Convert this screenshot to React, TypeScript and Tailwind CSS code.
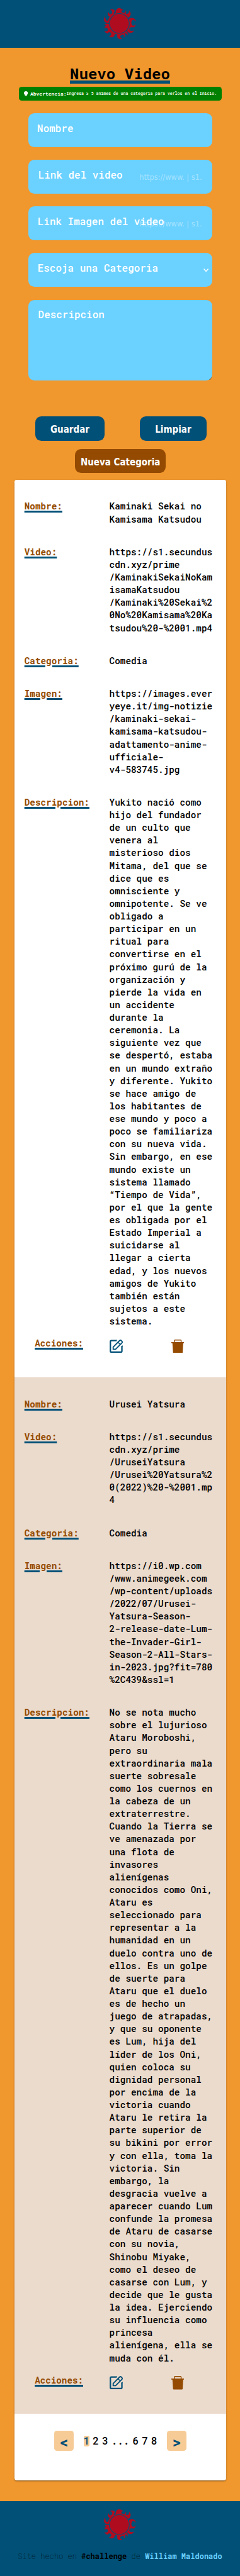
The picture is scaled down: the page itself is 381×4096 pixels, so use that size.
type Video = {
  nombre: string;
  video: string;
  categoria: string;
  imagen: string;
  descripcion: string;
};

const videos: Video[] = [
  {
    nombre: 'Kaminaki Sekai no\nKamisama Katsudou',
    video:
      'https://s1.secundus\ncdn.xyz/prime\n/KaminakiSekaiNoKam\nisamaKatsudou\n/Kaminaki%20Sekai%2\n0No%20Kamisama%20Ka\ntsudou%20-%2001.mp4',
    categoria: 'Comedia',
    imagen:
      'https://images.ever\nyeye.it/img-notizie\n/kaminaki-sekai-\nkamisama-katsudou-\nadattamento-anime-\nufficiale-\nv4-583745.jpg',
    descripcion:
      'Yukito nació como\nhijo del fundador\nde un culto que\nvenera al\nmisterioso dios\nMitama, del que se\ndice que es\nomnisciente y\nomnipotente. Se ve\nobligado a\nparticipar en un\nritual para\nconvertirse en el\npróximo gurú de la\norganización y\npierde la vida en\nun accidente\ndurante la\nceremonia. La\nsiguiente vez que\nse despertó, estaba\nen un mundo extraño\ny diferente. Yukito\nse hace amigo de\nlos habitantes de\nese mundo y poco a\npoco se familiariza\ncon su nueva vida.\nSin embargo, en ese\nmundo existe un\nsistema llamado\n“Tiempo de Vida”,\npor el que la gente\nes obligada por el\nEstado Imperial a\nsuicidarse al\nllegar a cierta\nedad, y los nuevos\namigos de Yukito\ntambién están\nsujetos a este\nsistema.',
  },
  {
    nombre: 'Urusei Yatsura',
    video:
      'https://s1.secundus\ncdn.xyz/prime\n/UruseiYatsura\n/Urusei%20Yatsura%2\n0(2022)%20-%2001.mp\n4',
    categoria: 'Comedia',
    imagen:
      'https://i0.wp.com\n/www.animegeek.com\n/wp-content/uploads\n/2022/07/Urusei-\nYatsura-Season-\n2-release-date-Lum-\nthe-Invader-Girl-\nSeason-2-All-Stars-\nin-2023.jpg?fit=780\n%2C439&ssl=1',
    descripcion:
      'No se nota mucho\nsobre el lujurioso\nAtaru Moroboshi,\npero su\nextraordinaria mala\nsuerte sobresale\ncomo los cuernos en\nla cabeza de un\nextraterrestre.\nCuando la Tierra se\nve amenazada por\nuna flota de\ninvasores\nalienígenas\nconocidos como Oni,\nAtaru es\nseleccionado para\nrepresentar a la\nhumanidad en un\nduelo contra uno de\nellos. Es un golpe\nde suerte para\nAtaru que el duelo\nes de hecho un\njuego de atrapadas,\ny que su oponente\nes Lum, hija del\nlíder de los Oni,\nquien coloca su\ndignidad personal\npor encima de la\nvictoria cuando\nAtaru le retira la\nparte superior de\nsu bikini por error\ny con ella, toma la\nvictoria. Sin\nembargo, la\ndesgracia vuelve a\naparecer cuando Lum\nconfunde la promesa\nde Ataru de casarse\ncon su novia,\nShinobu Miyake,\ncomo el deseo de\ncasarse con Lum, y\ndecide que le gusta\nla idea. Ejerciendo\nsu influencia como\nprincesa\nalienígena, ella se\nmuda con él.',
  },
];

function Sun() {
  return (
    <svg viewBox="34 6 266 260" className="block h-[49.3px] w-[50.5px]">
      <path
        fill="#b00c20"
        d="M133 48C130 32 138 8 158 6C170 5 178 8 180 14Q188 18 192 13C193 24 184 26 177 27C180 40 190 46 200 46C212 44 220 34 214 22C222 30 222 46 216 52C232 58 248 48 246 24C262 42 264 74 235 86L240 104C250 86 284 78 299 108L298 120C290 98 272 100 266 115C258 136 268 154 282 152C292 150 297 146 298 136C300 160 286 170 270 166C252 162 240 178 250 192C262 200 278 198 286 189C280 210 264 214 250 212C234 208 226 198 226 186L222 198C232 204 235 220 231 236C230 222 222 216 206 217C216 228 214 246 196 250C202 244 206 234 200 230C190 224 176 232 171 240C168 252 178 258 188 256C180 268 150 268 146 250C146 236 146 222 134 221C122 222 124 236 118 242C108 256 84 250 76 238C92 240 100 226 93 214C84 204 68 208 66 218C54 220 42 206 38 196C50 204 64 200 67 188C66 170 50 162 40 180C38 162 44 154 56 154Q46 144 38 148C44 134 66 132 77 141L77 126C58 136 34 124 34 100Q36 84 44 72C44 92 50 112 62 112C74 106 72 90 84 78C68 72 62 54 70 36C74 50 82 58 92 56C104 50 108 34 98 27Q92 22 84 22C98 10 122 14 124 30C122 42 112 46 118 54Z"
      />
      <circle cx="163" cy="134" r="86" fill="#005077" />
      <circle cx="163" cy="134" r="80" fill="#b00c20" />
    </svg>
  );
}

function Bulb() {
  return (
    <svg viewBox="0 0 11 14" className="mr-[3.3px] block h-[8.2px] w-[6.3px] fill-white">
      <path d="M5.5 0C2.4 0 0 2.3 0 5.2C0 7.2 1 8.8 2.6 9.8V11.6H8.4V9.8C10 8.8 11 7.2 11 5.2C11 2.3 8.6 0 5.5 0ZM3 12.4H8V13.2Q8 14 7.2 14H3.8Q3 14 3 13.2Z" />
    </svg>
  );
}

function EditIcon() {
  return (
    <svg viewBox="20 36 112 111" className="block h-[21.1px] w-[21.25px]" fill="none" stroke="#005077">
      <path strokeWidth="12" d="M79 44.5H34Q26.5 44.5 26.5 52V133Q26.5 141 34 141H115Q123 141 123 133V90" />
      <path fill="#005077" stroke="none" d="M76 38.5H84L74 50.5ZM117 95L129 83V95Z" />
      <path strokeWidth="10" d="M50 117V98L103 45Q110.5 38 118 45L122.5 49.5Q130 57 122.5 64L70 117Z" />
      <path strokeWidth="8" d="M90 58L110 78" />
    </svg>
  );
}

function TrashIcon() {
  return (
    <svg viewBox="534 36 107 114" className="block h-[21.6px] w-[20.3px]">
      <path fill="none" stroke="#944a00" strokeWidth="7.5" d="M559 60V45Q559 40 564 40H611Q616 40 616 45V60" />
      <path fill="#944a00" d="M534 57H641V66H633L629 143Q628.5 149.5 622 149.5H555Q548.5 149.5 548 143L543 66H534Z" />
    </svg>
  );
}

const labelClass =
  'font-bold text-[#944a00] underline decoration-[#005077] decoration-[2.8px] underline-offset-[1.5px]';

function Field({ label, value }: { label: string; value: string }) {
  return (
    <div className="flex items-start text-[14.35px] leading-[20.12px]">
      <div className="w-[134.9px] shrink-0">
        <span className={labelClass}>{label}</span>
      </div>
      <div className="whitespace-pre font-medium text-black">{value}</div>
    </div>
  );
}

function VideoRow({ data, className }: { data: Video; className: string }) {
  return (
    <div className={'pl-[15.8px] ' + className}>
      <div className="flex flex-col gap-[32.1px]">
        <Field label="Nombre:" value={data.nombre} />
        <Field label="Video:" value={data.video} />
        <Field label="Categoria:" value={data.categoria} />
        <Field label="Imagen:" value={data.imagen} />
        <Field label="Descripcion:" value={data.descripcion} />
      </div>
      <div className="mt-[15.2px] flex items-start pl-[16.5px] text-[14.23px] leading-[20.12px]">
        <div className="w-[119.3px] shrink-0">
          <span className={labelClass}>Acciones:</span>
        </div>
        <div className="w-[97.5px] shrink-0 pt-[3.2px]">
          <EditIcon />
        </div>
        <div className="pt-[3.2px]">
          <TrashIcon />
        </div>
      </div>
    </div>
  );
}

const fieldBox = 'relative h-[53.6px] rounded-[9.7px] bg-[#6bd1ff] pt-[14px]';
const fieldLabel = 'relative block whitespace-nowrap text-[15.94px] font-medium leading-[20px] text-white';
const placeholderClass =
  "absolute left-[176.3px] top-[17.6px] whitespace-nowrap font-['DejaVu_Sans_Condensed','DejaVu_Sans',sans-serif] text-[12.7px] leading-[20px] text-white/40 [font-stretch:condensed]";
const buttonClass =
  "block h-[38.7px] rounded-[9.7px] pt-[3.8px] text-center font-['DejaVu_Sans_Condensed','DejaVu_Sans',sans-serif] text-[15px] font-bold leading-[20px] text-white [font-stretch:condensed]";
const arrowClass =
  'flex h-[32.4px] w-[31.9px] items-center justify-center rounded-[4.6px] bg-[#f7cb96] pt-[4.5px] text-[23.8px] font-bold leading-[20px] text-[#005077]';
const pageClass = 'w-[9.7px] text-center';

export default function App() {
  return (
    <div className="flex h-[4096px] w-full flex-col overflow-hidden bg-[#f0972e] font-['Roboto_Mono',monospace] text-black">
      <header className="flex h-[76.3px] shrink-0 justify-center bg-[#005077] pt-[12.6px]">
        <Sun />
      </header>

      <main className="h-[3900.7px] shrink-0">
        <h1 className="pt-[24.5px] text-center text-[24.1px] font-bold leading-[32px]">
          <span className="underline decoration-[#005077] decoration-[5.1px] underline-offset-[2.2px]">Nuevo Video</span>
        </h1>

        <div className="ml-[29.7px] mt-[5.5px] flex h-[22.2px] w-[322.8px] items-center rounded-[4.6px] bg-[#008000] pl-[8.7px] text-white">
          <Bulb />
          <span className="whitespace-nowrap text-[8px] font-bold leading-[12px]">Abvertencia:</span>
          <span className="whitespace-nowrap text-[6.52px] font-medium leading-[12px]">
            Ingresa ≥ 5 animes de una categoria para verlos en el Inicio.
          </span>
        </div>

        <form className="ml-[45px] mt-[19.9px] flex w-[291.9px] flex-col gap-[20.4px]">
          <div className={fieldBox}>
            <label className={fieldLabel + ' pl-[14.1px]'}>Nombre</label>
          </div>
          <div className={fieldBox}>
            <span className={placeholderClass}>https://www. | s1.</span>
            <label className={fieldLabel + ' pl-[15.7px]'}>Link del video</label>
          </div>
          <div className={fieldBox}>
            <span className={placeholderClass}>https://www. | s1.</span>
            <label className={fieldLabel + ' pl-[14.8px]'}>Link Imagen del video</label>
          </div>
          <div className={fieldBox}>
            <label className={fieldLabel + ' pl-[14.7px]'}>Escoja una Categoria</label>
            <svg
              viewBox="0 0 14 9"
              className="absolute left-[277.8px] top-[24.3px] h-[5.3px] w-[8.2px]"
              fill="none"
              stroke="#fff"
              strokeWidth="2.5"
            >
              <path d="M1 1L7 7.5L13 1" />
            </svg>
          </div>
          <div className="relative mt-[0.6px] h-[128.5px] rounded-[9.7px] bg-[#6bd1ff] pt-[12.8px]">
            <label className={fieldLabel + ' pl-[15.6px]'}>Descripcion</label>
            <svg
              viewBox="0 0 7 7"
              className="absolute bottom-[1px] right-[1.2px] h-[4px] w-[4px]"
              fill="none"
              stroke="#5c5c52"
              strokeWidth="1"
            >
              <path d="M0 7L7 0M3 7L7 3" />
            </svg>
          </div>
        </form>

        <div className="mt-[56.5px] flex pl-[56.4px]">
          <button className={buttonClass + ' w-[109.2px] bg-[#005077]'}>Guardar</button>
          <button className={buttonClass + ' ml-[56.4px] w-[105.9px] bg-[#005077]'}>Limpiar</button>
        </div>
        <button className={buttonClass + ' ml-[119.4px] mt-[13.1px] w-[143.6px] bg-[#944a00]'}>Nueva Categoria</button>

        <section className="ml-[22.9px] mt-[10.8px] h-[3181.3px] w-[336.3px] overflow-hidden rounded-[4px] bg-white shadow-[0_2px_2px_-1px_rgba(0,0,0,0.3),0_1px_3px_rgba(0,0,0,0.25)]">
          <VideoRow data={videos[0]} className="h-[1427px] bg-white pt-[32.3px]" />
          <VideoRow data={videos[1]} className="h-[1647.8px] bg-[#ebdbcd] pt-[32.4px]" />
          <nav className="flex items-center justify-center pt-[26.6px]">
            <span className={arrowClass}>&lt;</span>
            <div className="mx-[15.1px] mt-[1.6px] flex gap-[5px] text-[16px] font-medium leading-[16.5px]">
              <span className={pageClass + ' rounded-[2.3px] bg-[#f7cb96] text-[#005077]'}>1</span>
              <span className={pageClass}>2</span>
              <span className={pageClass}>3</span>
              <span>...</span>
              <span className={pageClass}>6</span>
              <span className={pageClass}>7</span>
              <span className={pageClass}>8</span>
            </div>
            <span className={arrowClass}>&gt;</span>
          </nav>
        </section>
      </main>

      <footer className="flex grow flex-col items-center bg-[#005077] pt-[12.7px]">
        <Sun />
        <p className="mt-[15px] whitespace-nowrap text-[12.02px] font-thin leading-[20px] text-black">
          Site hecho en <span className="font-bold">#challenge</span> de{' '}
          <span className="font-bold text-[#6bd1ff]">William Maldonado</span>
        </p>
      </footer>
    </div>
  );
}
